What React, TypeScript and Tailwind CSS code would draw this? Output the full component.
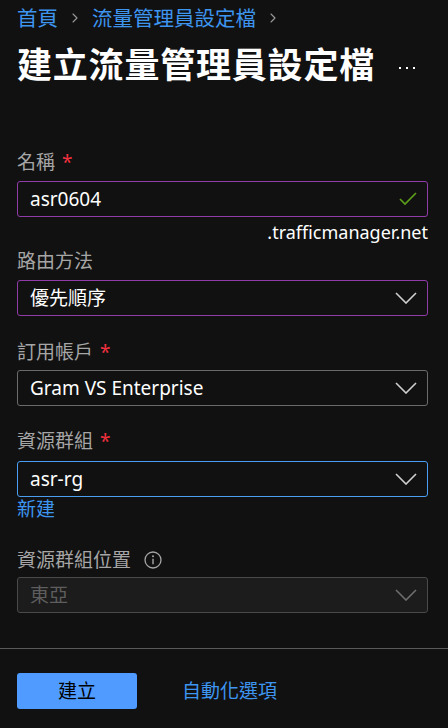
import { ChevronRight } from 'lucide-react';

const Chevron = ({ muted = false }: { muted?: boolean }) => (
  <svg width="22" height="12" viewBox="0 0 22 12" fill="none" className="shrink-0">
    <path d="M1 1L11 11L21 1" stroke={muted ? '#6e6e6e' : '#d0d0d0'} strokeWidth="1.6" />
  </svg>
);

const Label = ({ text, required = false, info = false }: { text: string; required?: boolean; info?: boolean }) => (
  <div className="flex items-center h-6 text-[19px] leading-6 text-[#a6a6a6]">
    <span>{text}</span>
    {required && <span className="ml-[7px] text-[#f1303f]">*</span>}
    {info && (
      <svg width="18" height="18" viewBox="0 0 18 18" className="ml-[13px]">
        <circle cx="9" cy="9" r="8" fill="none" stroke="#a6a6a6" strokeWidth="1.3" />
        <circle cx="9" cy="5.3" r="1" fill="#a6a6a6" />
        <path d="M9 7.8V13.2" stroke="#a6a6a6" strokeWidth="1.4" />
      </svg>
    )}
  </div>
);

const Field = ({
  value,
  border,
  disabled = false,
  check = false,
}: {
  value: string;
  border: string;
  disabled?: boolean;
  check?: boolean;
}) => (
  <div
    className={`h-9 rounded-[3px] border flex items-center justify-between pl-[12px] pr-[10px] ${border} ${
      disabled ? 'bg-[#1c1c1c] text-[#5e5e5e]' : 'bg-[#111111] text-white'
    }`}
  >
    <span className="text-[19px] leading-6">{value}</span>
    {check ? (
      <svg width="18" height="14" viewBox="0 0 18 14" fill="none">
        <path d="M1 7L6 12L17 1" stroke="#5c9d1a" strokeWidth="1.7" />
      </svg>
    ) : (
      <Chevron muted={disabled} />
    )}
  </div>
);

export default function App() {
  return (
    <div
      className="w-[448px] h-[728px] bg-[#111111] text-white overflow-hidden flex flex-col"
      style={{ fontFamily: '"Noto Sans", "Noto Sans CJK TC", sans-serif' }}
    >
      <div className="pl-[17px] pr-[20px]">
        <div className="flex items-center pt-[6px] h-[30px] text-[20.5px] leading-6 text-[#3d95f0]">
          <span>首頁</span>
          <ChevronRight size={16} strokeWidth={1.6} className="mx-[9px] text-[#9a9a9a]" />
          <span>流量管理員設定檔</span>
          <ChevronRight size={16} strokeWidth={1.6} className="mx-[9px] text-[#9a9a9a]" />
        </div>

        <div className="mt-[15px] flex items-center justify-between h-10">
          <h1 className="text-[35px] leading-10 font-bold tracking-[0.8px]">建立流量管理員設定檔</h1>
          <div className="flex gap-[5px] pr-[13px] pt-[6px]">
            <span className="w-[2px] h-[2px] bg-white" />
            <span className="w-[2px] h-[2px] bg-white" />
            <span className="w-[2px] h-[2px] bg-white" />
          </div>
        </div>

        <div className="mt-[65px]">
          <Label text="名稱" required />
          <div className="mt-[7px]">
            <Field value="asr0604" border="border-[#8f3ba8]" check />
          </div>
          <div className="mt-[3px] h-6 text-right text-[18px] leading-6 text-white">.trafficmanager.net</div>
        </div>

        <div className="mt-[5px]">
          <Label text="路由方法" />
          <div className="mt-[7px]">
            <Field value="優先順序" border="border-[#8f3ba8]" />
          </div>
        </div>

        <div className="mt-[24px]">
          <Label text="訂用帳戶" required />
          <div className="mt-[6px]">
            <Field value="Gram VS Enterprise" border="border-[#6b6b6b]" />
          </div>
        </div>

        <div className="mt-[23px]">
          <Label text="資源群組" required />
          <div className="mt-[8px]">
            <Field value="asr-rg" border="border-[#4a9df0]" />
          </div>
          <div className="h-6 text-[19px] leading-6 text-[#3d95f0]">新建</div>
        </div>

        <div className="mt-[27px]">
          <Label text="資源群組位置" info />
          <div className="mt-[5px]">
            <Field value="東亞" border="border-[#4a4a4a]" disabled />
          </div>
        </div>
      </div>

      <div className="mt-[35px] border-t border-[#5a5a5a]" />

      <div className="px-[17px] mt-[24px] flex items-center">
        <button className="w-[120px] h-9 rounded-[3px] bg-[#4f9bff] text-black text-[19px] leading-6">建立</button>
        <span className="ml-[45px] text-[19px] leading-6 text-[#3d95f0]">自動化選項</span>
      </div>
    </div>
  );
}
